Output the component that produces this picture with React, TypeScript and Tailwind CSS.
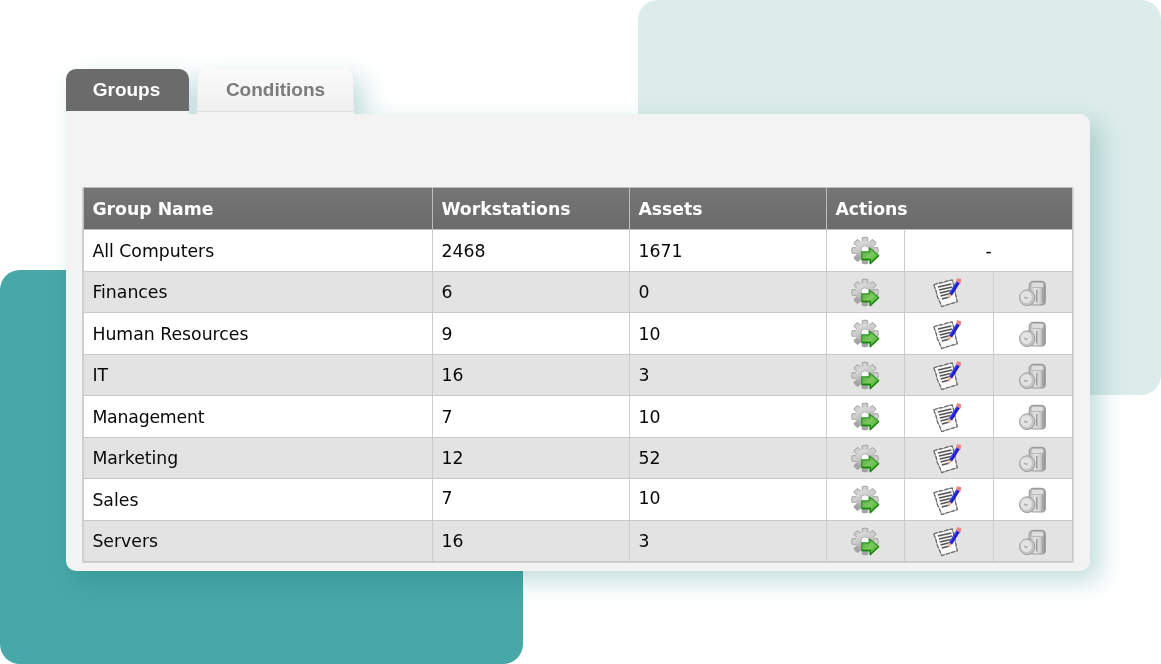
import React from "react";

type Group = { name: string; workstations: number; assets: number; tracking?: string; nudge?: string };

const groups: Group[] = [
  { name: "All Computers", workstations: 2468, assets: 1671 },
  { name: "Finances", workstations: 6, assets: 0 },
  { name: "Human Resources", workstations: 9, assets: 10 },
  { name: "IT", workstations: 16, assets: 3 },
  { name: "Management", workstations: 7, assets: 10, tracking: "tracking-[-0.2px]" },
  { name: "Marketing", workstations: 12, assets: 52, tracking: "tracking-[-0.05px]" },
  { name: "Sales", workstations: 7, assets: 10, nudge: "pb-[2px]" },
  { name: "Servers", workstations: 16, assets: 3 },
];

const teeth = [0, 45, 90, 135, 180, 225, 270, 315];

function Defs() {
  return (
    <svg className="absolute h-0 w-0" aria-hidden="true">
      <defs>
        <linearGradient id="gear" x1="0" y1="0" x2="0.4" y2="1">
          <stop offset="0" stopColor="#e3e3e3" />
          <stop offset="0.5" stopColor="#c8c8c8" />
          <stop offset="1" stopColor="#999999" />
        </linearGradient>
        <linearGradient id="arrow" x1="0" y1="0" x2="1" y2="1">
          <stop offset="0" stopColor="#4ba33c" />
          <stop offset="0.5" stopColor="#7cc95f" />
          <stop offset="1" stopColor="#3daa23" />
        </linearGradient>
        <linearGradient id="can" x1="0" y1="0" x2="1" y2="0">
          <stop offset="0" stopColor="#b5b5b5" />
          <stop offset="0.35" stopColor="#e2e2e2" />
          <stop offset="0.65" stopColor="#d5d5d5" />
          <stop offset="1" stopColor="#8f8f8f" />
        </linearGradient>
      </defs>
    </svg>
  );
}

function GearIcon() {
  return (
    <svg className="h-[30px] w-[30px]" viewBox="0 0 30 30">
      {teeth.map((a) => (
        <path key={a} d="M12.2 6.5V1.7Q15 .5 17.8 1.7V6.5" transform={`rotate(${a} 15 14.5)`} fill={a > 90 && a < 270 ? "#a5a5a5" : "#cfcfcf"} stroke="#9c9c9c" strokeWidth=".9" />
      ))}
      <circle cx="15" cy="14.5" r="9.4" fill="url(#gear)" />
      <circle cx="15" cy="13.8" r="4" fill="#fff" stroke="#b2b2b2" strokeWidth="1" />
      <path d="M11.8 15.8H19.5V11.9L28.7 19.6L20.3 27.5V23.5H11.8Z" fill="url(#arrow)" stroke="#35992a" strokeWidth="1.3" strokeLinejoin="round" />
      <path d="M28.7 19.6L20.3 27.5V23.5H11.8" fill="none" stroke="#168807" strokeWidth="1.3" strokeLinejoin="round" />
    </svg>
  );
}

function EditIcon() {
  return (
    <svg className="h-[32px] w-[32px]" viewBox="0 0 32 32">
      <path d="M1.8 8.8L6.5 7.2L11.5 6.4L15.5 4.9L20.2 4L22 10L23.5 18L25.3 25.8L18.5 27.8L9.6 30.6L7.8 25.7L5.4 20.8L4 15Z" fill="#f8f8f8" stroke="#999" strokeWidth="1" strokeLinejoin="round" />
      <path d="M1.8 8.8L6.5 7.2L11.5 6.4L15.5 4.9L20.2 4L22 10L23.5 18L25.3 25.8L18.5 27.8L9.6 30.6L7.8 25.7L5.4 20.8L4 15Z" fill="none" stroke="#666" strokeWidth="1.1" strokeDasharray="4 1.5" />
      <path d="M6 11L19.3 7.9M7 14L20.3 10.9M7.8 17L18.5 14.4M8.6 20L17.2 17.8M9.8 22.9L17.5 21" stroke="#555" strokeWidth="1.5" />
      <path d="M18.3 18.8L26.3 6" stroke="#2020cc" strokeWidth="3.8" />
      <path d="M17.6 17.8L25.2 5.6" stroke="#5158f2" strokeWidth=".8" />
      <path d="M16.6 17.3L20 19.6L15.7 22.2Z" fill="#efb18b" />
      <path d="M25.3 2.8L28.7 3.5L28.1 6.8L24.9 5Z" fill="#ef7777" stroke="#ef8585" strokeWidth="1.2" strokeLinejoin="round" />
    </svg>
  );
}

function TrashIcon() {
  return (
    <svg className="h-[28px] w-[28px]" viewBox="0 0 28 28">
      <path d="M10.2 6Q10.2 1.4 15 1.4H21.8Q26.3 1.4 26.3 5.5V21.4Q26.3 25 22 25H15Q10.2 25 10.2 22Z" fill="url(#can)" stroke="#9a9a9a" strokeWidth="1.1" />
      <rect x="12" y="2.5" width="12.8" height="5" rx="2.5" fill="#dedede" stroke="#aeaeae" strokeWidth=".8" />
      <path d="M17.8 10V22.5" stroke="#8d8d8d" strokeWidth="1.2" />
      <path d="M24 9V23" stroke="#a0a0a0" strokeWidth="1.4" />
      <ellipse cx="8.2" cy="17.7" rx="7.7" ry="7.9" fill="#c5c5c5" stroke="#9b9b9b" strokeWidth="1" />
      <ellipse cx="7.3" cy="17.1" rx="6.1" ry="6.4" fill="#e3e3e3" stroke="#bebebe" strokeWidth=".8" />
      <path d="M5.2 16.8L7 18.6L8.8 17.6" fill="none" stroke="#a3a3a3" strokeWidth="1.2" />
    </svg>
  );
}

function Row({ group, index }: { group: Group; index: number }) {
  const value = `flex items-center border-l border-[#cccccc] pl-[8.4px] ${group.nudge ?? "pt-[2px]"}`;
  return (
    <div className={`grid h-[41.5px] grid-cols-[349px_197px_197px_78px_89px_79px] border-b border-[#c8c8c8] text-[17.3px] leading-none text-[#080808] ${index % 2 ? "bg-[#e3e3e3]" : "bg-white"}`}>
      <div className={`flex items-center border-l border-[#cccccc] pl-[8.4px] pt-[2px] ${group.tracking ?? ""}`}>{group.name}</div>
      <div className={value}>{group.workstations}</div>
      <div className={value}>{group.assets}</div>
      <div className="flex items-center justify-center border-l border-[#cccccc] pr-[2px] pt-[2px]"><GearIcon /></div>
      {index === 0 ? (
        <div className="col-span-2 flex items-center justify-center border-l border-[#cccccc] pt-[2px] text-black">-</div>
      ) : (
        <>
          <div className="flex items-center justify-center border-l border-[#cccccc] pr-[2px] pt-px"><EditIcon /></div>
          <div className="flex items-center justify-center border-l border-[#cccccc] pt-[4px]"><TrashIcon /></div>
        </>
      )}
    </div>
  );
}

export default function App() {
  const head = "flex items-center border-l border-[#bcbcbc] pl-[8.4px] pt-[2px]";
  return (
    <main className="relative h-[664px] w-[1161px] overflow-hidden bg-white pl-[66px] pt-[69px]">
      <Defs />
      <div className="absolute right-0 top-0 h-[395px] w-[523px] rounded-[20px] bg-[#dcecea]" />
      <div className="absolute bottom-0 left-0 h-[394px] w-[523px] rounded-[20px] bg-[#48a7a7]" />
      <div className="relative w-[1024px] drop-shadow-[10px_10px_13px_rgba(0,110,110,0.24)]">
        <nav className="flex h-[45px] font-['Liberation_Sans',sans-serif] text-[19px] font-bold leading-none">
          <div className="w-[123px] rounded-t-[10px] bg-[#f3f3f3]">
            <div className="flex h-[42px] items-center justify-center rounded-t-[10px] bg-[#6b6b6b] pb-[2px] pr-[2px] text-white">Groups</div>
          </div>
          <div className="ml-[8px] w-[157px] rounded-t-[8px] bg-[#f3f3f3]">
            <div className="flex h-[43px] items-center justify-center rounded-t-[8px] border-x border-b border-x-[#eaeaea] border-b-[#dddddd] bg-linear-to-b from-[#fbfbfb] to-[#efefef] pb-[2px] text-[#7b7b7b]">Conditions</div>
          </div>
        </nav>
        <section className="h-[457px] rounded-[10px] rounded-tl-none bg-[#f3f3f3] pl-[17px] pt-[73px] font-['DejaVu_Sans',Verdana,sans-serif]">
          <div className="w-[990px] border-r border-[#c8c8c8] shadow-[-1px_1px_0_#d2d2d2,1px_1px_0_#d9d9d9]">
            <div className="grid h-[43px] grid-cols-[349px_197px_197px_246px] border-y border-[#bcbcbc] bg-linear-to-b from-[#757575] to-[#6b6b6b] text-[17.3px] font-bold leading-none text-white">
              <div className={head}>Group Name</div>
              <div className={head}>Workstations</div>
              <div className={head}>Assets</div>
              <div className={head}>Actions</div>
            </div>
            {groups.map((g, i) => <Row key={g.name} group={g} index={i} />)}
          </div>
        </section>
      </div>
    </main>
  );
}
